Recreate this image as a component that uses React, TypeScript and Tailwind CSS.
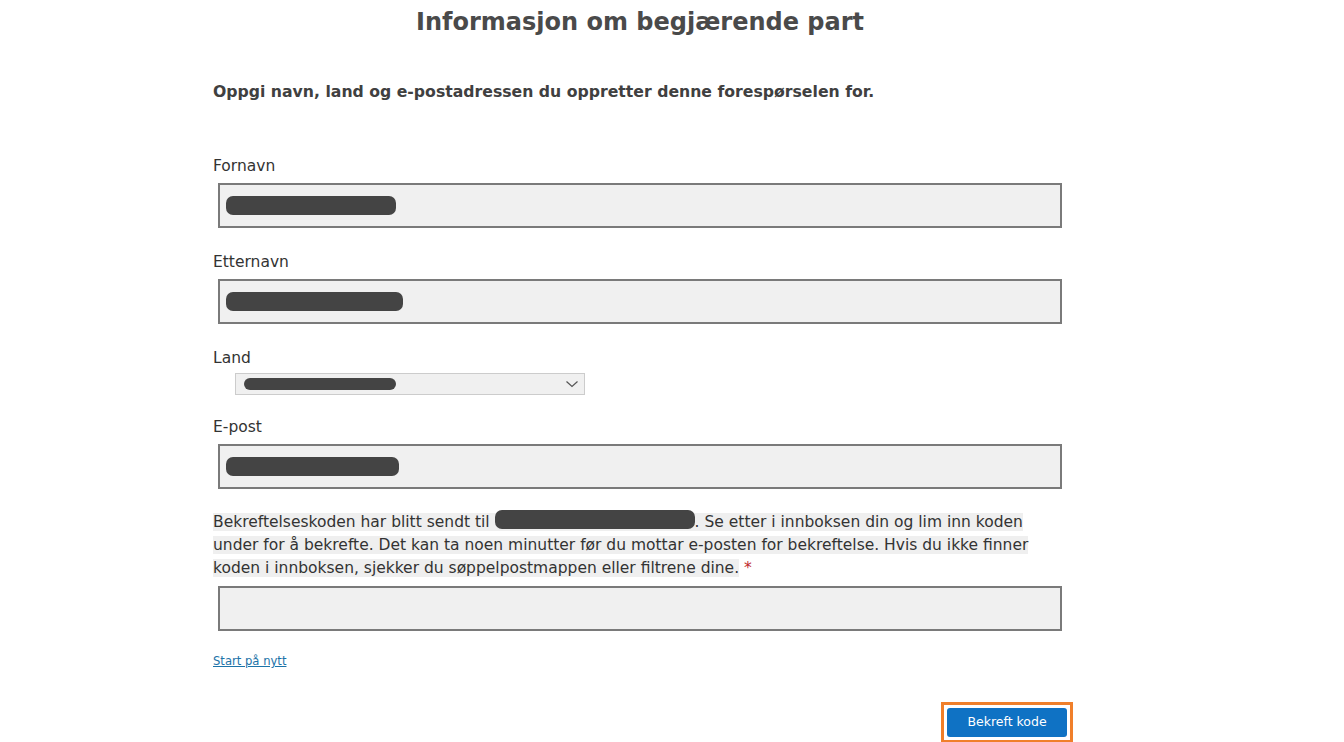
import React from "react";

const font = { fontFamily: '"DejaVu Sans", Verdana, sans-serif' };

function Blob({ w }: { w: string }) {
  return <span className={`block h-[19px] ${w} rounded-[7px] bg-[#444444]`} />;
}

function TextBox({ blob }: { blob?: string }) {
  return (
    <div className="mx-[5px] flex h-[45px] items-center border-2 border-[#7a7a7a] bg-[#f0f0f0] px-[6px]">
      {blob && <Blob w={blob} />}
    </div>
  );
}

function Label({ children }: { children: React.ReactNode }) {
  return <div className="text-[15.5px] leading-5 text-[#333333]">{children}</div>;
}

export default function App() {
  return (
    <div className="min-h-[742px] bg-white" style={font}>
      <div className="ml-[213px] flex w-[854px] flex-col">
        <h1 className="pt-[8px] text-center text-[24px] font-bold leading-7 text-[#4a4a4a]">
          Informasjon om begjærende part
        </h1>
        <p className="mt-[46px] text-[15.7px] font-bold leading-5 text-[#404040]">
          Oppgi navn, land og e-postadressen du oppretter denne forespørselen for.
        </p>

        <div className="mt-[54px] flex flex-col">
          <Label>Fornavn</Label>
          <div className="mt-[7px]">
            <TextBox blob="w-[170px]" />
          </div>

          <div className="mt-[24px]">
            <Label>Etternavn</Label>
          </div>
          <div className="mt-[7px]">
            <TextBox blob="w-[177px]" />
          </div>

          <div className="mt-[24px]">
            <Label>Land</Label>
          </div>
          <div className="ml-[22px] mt-[5px] flex h-[22px] w-[350px] items-center justify-between border border-[#cccccc] bg-[#f0f0f0] pl-[8px] pr-[5px]">
            <span className="block h-[12px] w-[152px] rounded-[6px] bg-[#444444]" />
            <svg width="14" height="8" viewBox="0 0 14 8" fill="none">
              <path d="M1.5 1.5 7 6.5l5.5-5" stroke="#555" strokeWidth="1.2" />
            </svg>
          </div>

          <div className="mt-[22px]">
            <Label>E-post</Label>
          </div>
          <div className="mt-[7px]">
            <TextBox blob="w-[173px]" />
          </div>

          <p className="mt-[19px] w-[830px] text-[15.5px] leading-[23px] text-[#333333]">
            <span className="bg-[#efefef] [box-decoration-break:clone]">
              Bekreftelseskoden har blitt sendt til{" "}
              <span className="inline-block h-[19px] w-[200px] translate-y-[2px] rounded-[7px] bg-[#444444] align-baseline" />
              . Se etter i innboksen din og lim inn koden under for å bekrefte. Det kan ta noen minutter før du mottar
              e-posten for bekreftelse. Hvis du ikke finner koden i innboksen, sjekker du søppelpostmappen eller
              filtrene dine.
            </span>{" "}
            <span className="text-[#c0282d]">*</span>
          </p>

          <div className="mt-[6px]">
            <TextBox />
          </div>

          <a href="#" className="mt-[22px] self-start text-[11.6px] leading-4 text-[#1c73a8] underline">
            Start på nytt
          </a>

          <div className="mr-[-6px] mt-[33px] flex justify-end">
            <div className="border-[3px] border-[#f07f2a] p-[3px]">
              <button className="h-[29px] w-[120px] rounded-[3px] bg-[#0f72c4] text-[12.5px] font-medium text-white">
                Bekreft kode
              </button>
            </div>
          </div>
        </div>
      </div>
    </div>
  );
}
